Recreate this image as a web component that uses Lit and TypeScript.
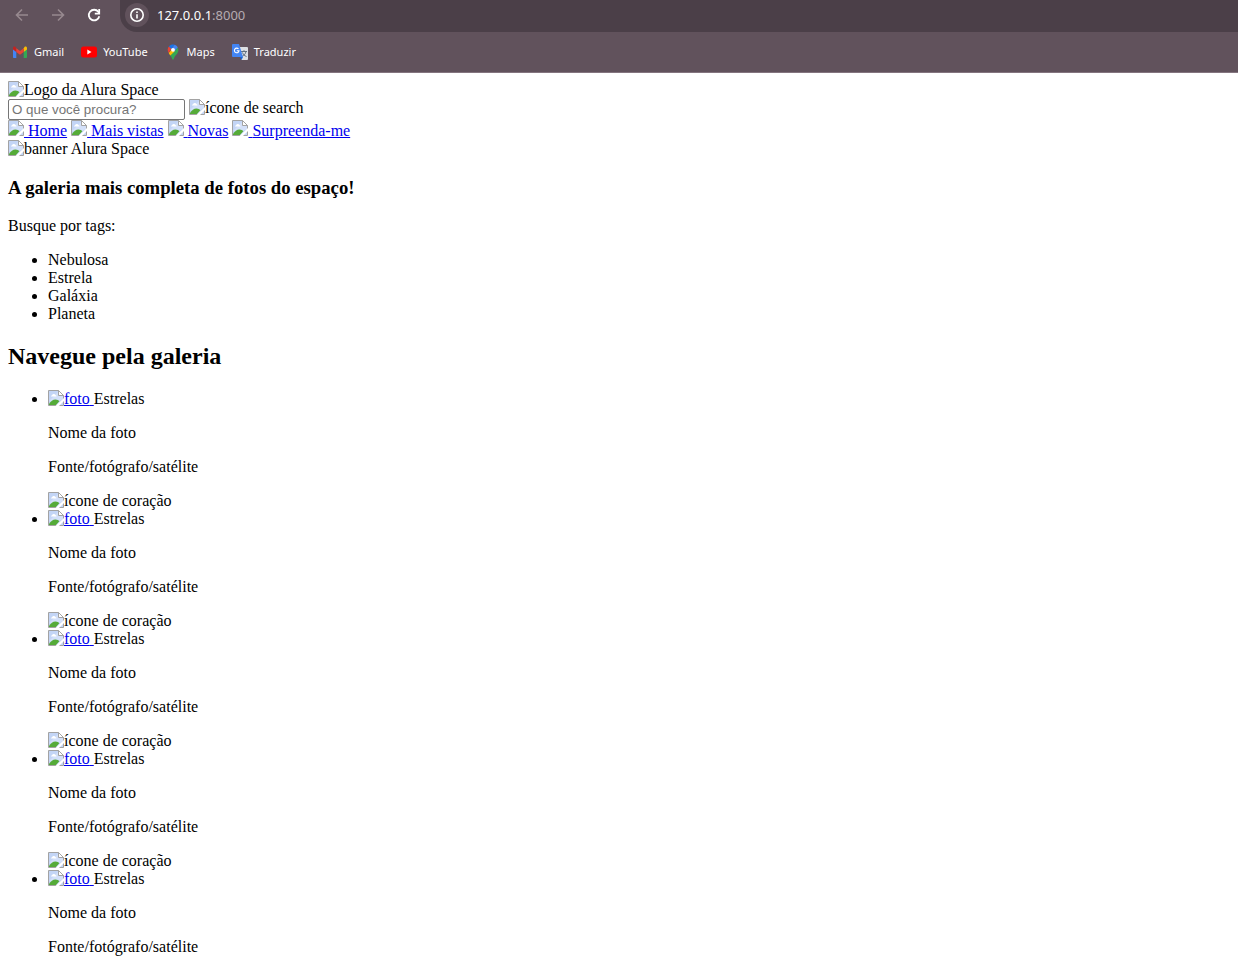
import { LitElement, html, css, svg, nothing } from "lit";
import { customElement } from "lit/decorators.js";

const brokenIcon = html`<svg class="broken" viewBox="0 0 16 16" aria-hidden="true">
  <path d="M.5.5h10l5 5v10H.5z" fill="#c3d5f6"/>
  <path d="M1 11L11 1v5h4v3L9 12z" fill="#d3e0f9"/>
  <path d="M3 6.500a1.300 1.300 0 0 1 1-1.300 2 2 0 0 1 3.600 0 1.200 1.200 0 0 1 .9 1.300z" fill="#fff"/>
  <path d="M1 15v-1C2.500 11.500 5 9.500 7.500 9.500c1.800 0 3 .8 3.800 1.700L8 15z" fill="#55ab38"/>
  <path d="M11 15l4-3.500V15z" fill="#c3d5f6"/>
  <path d="M.5 15.500V.5h10l5 5v10z" fill="none" stroke="#a3a3a3"/>
  <path d="M10.500.5v5h5z" fill="#fff" stroke="#a3a3a3"/>
  <path d="M7.500 16L16 8v3L11 16z" fill="#fff"/>
</svg>`;

const gmail = svg`<svg width="16" height="16" viewBox="0 0 16 16" aria-hidden="true">
  <path d="M1 4.500v8.500c0 .6.400 1 1 1h2.300V7.500z" fill="#4285f4"/>
  <path d="M15 4.500v8.500c0 .6-.4 1-1 1h-2.300V7.500z" fill="#34a853"/>
  <path d="M11.700 4.200V8L15 5.500V4.200c0-1.500-1.500-2-2.500-1.200z" fill="#fbbc04"/>
  <path d="M1 4.200V5.500L4.300 8V4.200L3.500 3C2.500 2.200 1 2.700 1 4.200z" fill="#c5221f"/>
  <path d="M4.300 4.200V8L8 10.800 11.700 8V4.200L8 7z" fill="#ea4335"/>
</svg>`;

const youtube = svg`<svg width="16" height="16" viewBox="0 0 16 16" aria-hidden="true">
  <rect y="2.500" width="16" height="11" rx="2.500" fill="#f00"/>
  <path d="M6.300 5.600v4.800L10.500 8z" fill="#fff"/>
</svg>`;

const maps = svg`<svg width="16" height="16" viewBox="0 0 16 16" aria-hidden="true">
  <path d="M12.700 3.400c1.500 3.200.2 5.200-1.300 7.100-1.300 1.600-2 2.500-2.500 4.200-.3 1.200-1.500 1.200-1.800 0-.4-1.500-1-2.300-1.800-3.300z" fill="#34a853"/>
  <path d="M3.700 9L7 5l2.800 2.200-4.400 4.400C4.600 10.600 4 10 3.700 9z" fill="#fbbc04"/>
  <path d="M3.900 2.400L6.500 4.600 3.700 9C2.200 6.300 2.500 4 3.900 2.400z" fill="#ea4335"/>
  <path d="M3.900 2.400C5.500.4 7.800.1 9.600.7L6.400 5z" fill="#1a73e8"/>
  <path d="M9.600.7c1.500.5 2.500 1.400 3.100 2.700L9.300 7.500 6.400 5z" fill="#4285f4"/>
  <circle cx="8" cy="5.800" r="1.900" fill="#fff"/>
</svg>`;

const translate = svg`<svg width="16" height="16" viewBox="0 0 16 16" aria-hidden="true">
  <path d="M7 3h8a1 1 0 0 1 1 1v11a1 1 0 0 1-1 1H9.500z" fill="#dcdfe3"/>
  <path d="M9 7.500h6M12 6.200v1.300M14 7.500c-.5 2.500-2 4-4 5M10.500 8.500c.7 2 2 3.200 4 4" fill="none" stroke="#607080" stroke-width="1"/>
  <path d="M1 0h6l4 13H1a1 1 0 0 1-1-1V1a1 1 0 0 1 1-1z" fill="#4285f4"/>
  <path d="M8 13h3l-1.500 3z" fill="#1967d2"/>
  <path d="M6.500 5A2.300 2.300 0 1 0 7 6.700H4.800" fill="none" stroke="#fff" stroke-width="1.100"/>
</svg>`;

@customElement("browser-bar")
export class BrowserBar extends LitElement {
  static styles = css`
    :host {
      display: block;
      flex: none;
      background: #61525c;
      border-bottom: 1px solid #84757f;
      color: #fff;
      font-family: "Noto Sans", sans-serif;
    }
    .toolbar {
      display: flex;
      height: 32px;
      padding-left: 14px;
    }
    .nav {
      display: flex;
      gap: 20px;
      height: 30px;
      align-items: center;
    }
    button {
      display: flex;
      padding: 0;
      border: 0;
      background: none;
      color: #fff;
    }
    button:disabled {
      color: #97898f;
    }
    .address {
      display: flex;
      flex: 1;
      align-items: center;
      margin-left: 18px;
      padding: 0 0 2px 5px;
      border-radius: 0 0 0 17px;
      background: #4b3f48;
      font-size: 13px;
      line-height: 18px;
    }
    .info {
      width: 24px;
      height: 24px;
      margin-right: 8px;
      align-items: center;
      justify-content: center;
      border-radius: 12px;
      background: #61525c;
    }
    .port {
      color: #b5abb1;
    }
    .bookmarks {
      display: flex;
      gap: 17px;
      height: 40px;
      padding-left: 12px;
      align-items: center;
      font-size: 11px;
      line-height: 16px;
    }
    .bookmarks a {
      display: flex;
      gap: 6px;
      align-items: center;
      color: #fff;
      text-decoration: none;
    }
  `;

  render() {
    return html`
      <div class="toolbar">
        <div class="nav">
          <button disabled aria-label="Voltar">
            <svg width="16" height="16" viewBox="0 0 16 16" fill="none" stroke="currentColor" stroke-width="1.600"><path d="M14 8H3M8 2.500L2.500 8 8 13.500"/></svg>
          </button>
          <button disabled aria-label="Avançar">
            <svg width="16" height="16" viewBox="0 0 16 16" fill="none" stroke="currentColor" stroke-width="1.600"><path d="M2 8h11M8 2.500L13.500 8 8 13.500"/></svg>
          </button>
          <button aria-label="Recarregar">
            <svg width="16" height="16" viewBox="0 0 16 16" fill="none" stroke="currentColor" stroke-width="1.800"><path d="M13.300 9.200A5.300 5.300 0 1 1 12.300 4.800L13.500 6"/><path d="M13.200 2v4.600H8.800"/></svg>
          </button>
        </div>
        <div class="address">
          <button class="info" aria-label="Informações do site">
            <svg width="16" height="16" viewBox="0 0 16 16" fill="none" stroke="currentColor" stroke-width="1.600"><circle cx="8" cy="8" r="6.200"/><path d="M8 7.200V11.500M8 4.500v1.600"/></svg>
          </button>
          <span>127.0.0.1</span><span class="port">:8000</span>
        </div>
      </div>
      <nav class="bookmarks">
        <a href="#">${gmail}Gmail</a>
        <a href="#">${youtube}YouTube</a>
        <a href="#">${maps}Maps</a>
        <a href="#">${translate}Traduzir</a>
      </nav>
    `;
  }
}

@customElement("app-root")
export class AppRoot extends LitElement {
  static styles = css`
    :host {
      display: flex;
      flex-direction: column;
      height: 100vh;
      overflow: hidden;
      background: #fff;
      color: #000;
      font-family: "Liberation Serif", "Times New Roman", serif;
      font-size: 16px;
      line-height: 18px;
    }
    .page {
      flex: 1;
      min-height: 0;
      overflow: hidden;
      padding: 8px;
    }
    .broken {
      width: 16px;
      height: 16px;
    }
    .alt {
      display: inline-block;
    }
    .alt .broken {
      vertical-align: top;
    }
    .search {
      display: flex;
      gap: 4px;
      align-items: flex-start;
    }
    input {
      box-sizing: border-box;
      width: 177px;
      height: 21px;
      padding: 1px 3px;
      border: 1px solid #767676;
      border-radius: 2px;
      font-family: "Liberation Sans", Arial, sans-serif;
    }
    input::placeholder {
      color: #757575;
    }
    a,
    a .alt {
      color: #0000ee;
      text-decoration: underline;
    }
    h2 {
      line-height: 27px;
    }
    h3 {
      line-height: 22px;
    }
  `;

  private links = ["Home", "Mais vistas", "Novas", "Surpreenda-me"];
  private tags = ["Nebulosa", "Estrela", "Galáxia", "Planeta"];
  private photos = [
    { likeable: true },
    { likeable: true },
    { likeable: true },
    { likeable: true },
    { likeable: false },
  ];

  private missing(text: string) {
    return html`<span class="alt">${brokenIcon}${text}</span>`;
  }

  render() {
    return html`
      <browser-bar></browser-bar>
      <div class="page">
        <header>
          <div>${this.missing("Logo da Alura Space")}</div>
          <div class="search">
            <input type="text" placeholder="O que você procura?" aria-label="O que você procura?" />
            ${this.missing("ícone de search")}
          </div>
          <nav>
            ${this.links.map((name) => html`<a href="#">${brokenIcon} ${name}</a> `)}
          </nav>
        </header>
        <main>
          <div>${this.missing("banner Alura Space")}</div>
          <h3>A galeria mais completa de fotos do espaço!</h3>
          <p>Busque por tags:</p>
          <ul>
            ${this.tags.map((tag) => html`<li>${tag}</li>`)}
          </ul>
          <h2>Navegue pela galeria</h2>
          <ul>
            ${this.photos.map(
              (photo) => html`<li>
                <a href="#">${this.missing("foto")} </a><span>Estrelas</span>
                <p>Nome da foto</p>
                <p>Fonte/fotógrafo/satélite</p>
                ${photo.likeable ? html`<div>${this.missing("ícone de coração")}</div>` : nothing}
              </li>`
            )}
          </ul>
        </main>
      </div>
    `;
  }
}
